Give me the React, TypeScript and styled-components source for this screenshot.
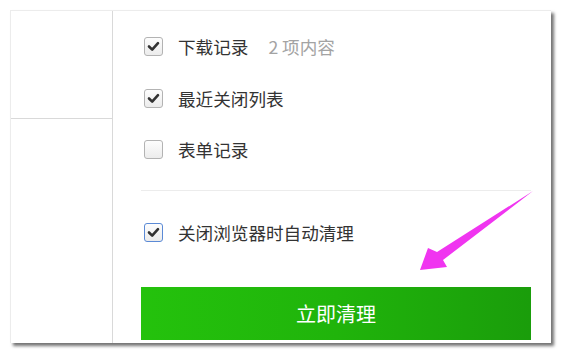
import React from "react";
import styled, { createGlobalStyle } from "styled-components";

const Global = createGlobalStyle`
  html, body { margin: 0; padding: 0; background: #ffffff; }
  body { font-family: "Noto Sans CJK SC", "Noto Sans", sans-serif; }
`;

const Page = styled.div`
  width: 562px;
  height: 355px;
  padding: 10px 0 0 10px;
  box-sizing: border-box;
  position: relative;
  overflow: hidden;
`;

const Frame = styled.div`
  width: 541px;
  height: 333px;
  background: #fff;
  border-top: 1px solid #ececec;
  border-left: 1px solid #ececec;
  box-sizing: border-box;
  box-shadow: 3px 3px 3px rgba(0, 0, 0, 0.55);
  display: flex;
`;

const Sidebar = styled.div`
  width: 101px;
  flex: none;
  border-right: 1px solid #d9d9d9;
  display: flex;
  flex-direction: column;
`;

const SideBlock = styled.div`
  height: 107px;
  border-bottom: 1px solid #d9d9d9;
`;

const Main = styled.div`
  flex: 1;
  display: flex;
  flex-direction: column;
  padding: 10px 20px 0 28px;
`;

const Row = styled.label`
  height: 51.5px;
  flex: none;
  display: flex;
  align-items: center;
  padding-left: 3px;
  font-size: 17.6px;
  color: #333;
`;

const Box = styled.span<{ $focus?: boolean }>`
  width: 19px;
  height: 19px;
  box-sizing: border-box;
  border: 1px solid ${(p) => (p.$focus ? "#5b8ad6" : "#b3b3b3")};
  border-radius: 3px;
  background: linear-gradient(#fdfdfd, #ececec);
  display: flex;
  align-items: center;
  justify-content: center;
  margin-right: 15px;
  flex: none;
`;

const Note = styled.span`
  color: #a3a3a3;
  margin-left: 20px;
`;

const Divider = styled.div`
  height: 1px;
  flex: none;
  background: #ececec;
  margin: 14px 0 16px;
`;

const Button = styled.button`
  margin-top: 29px;
  height: 53px;
  flex: none;
  border: none;
  background: linear-gradient(90deg, #24c20c 0%, #20b40b 50%, #1a9d0b 100%);
  color: #fff;
  font-family: "Noto Sans CJK SC", sans-serif;
  font-size: 20px;
  display: flex;
  align-items: center;
  justify-content: center;
  padding: 0;
`;

const Arrow = styled.svg`
  position: absolute;
  left: 0;
  top: 0;
  pointer-events: none;
`;

const Check = () => (
  <svg width="13" height="13" viewBox="0 0 13 13">
    <polyline points="2,6.5 5.2,9.6 11,3.2" fill="none" stroke="#333" strokeWidth="2.6" strokeLinecap="round" strokeLinejoin="round" />
  </svg>
);

const Item = ({ checked, focus, label, note }: { checked: boolean; focus?: boolean; label: string; note?: string }) => (
  <Row>
    <Box $focus={focus}>{checked && <Check />}</Box>
    <span>{label}</span>
    {note && <Note>{note}</Note>}
  </Row>
);

export default function App() {
  return (
    <>
      <Global />
      <Page>
        <Frame>
          <Sidebar>
            <SideBlock />
          </Sidebar>
          <Main>
            <Item checked label="下载记录" note="2 项内容" />
            <Item checked label="最近关闭列表" />
            <Item checked={false} label="表单记录" />
            <Divider />
            <Item checked focus label="关闭浏览器时自动清理" />
            <Button>立即清理</Button>
          </Main>
        </Frame>
        <Arrow width="562" height="355" viewBox="0 0 562 355">
          <polygon points="533,191 443,260 447,267 420,270 428,248 437,252" fill="#f035f0" />
        </Arrow>
      </Page>
    </>
  );
}
